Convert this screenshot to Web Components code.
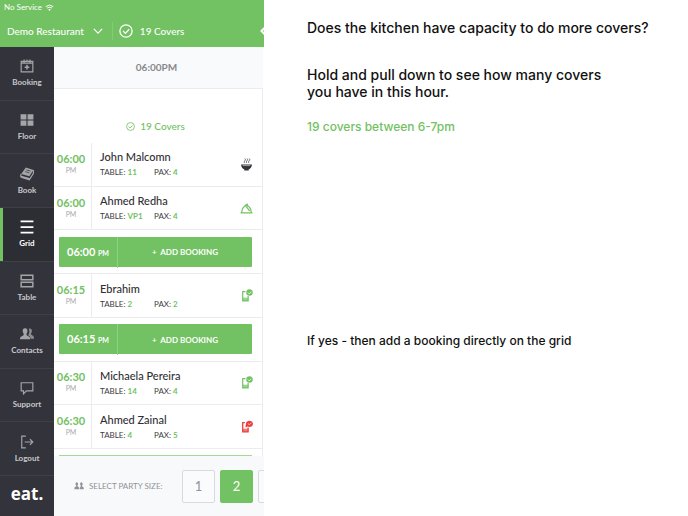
<!DOCTYPE html>
<html lang="en">
<head>
<meta charset="utf-8">
<meta name="viewport" content="width=device-width, initial-scale=1">
<title>Booking grid</title>
<style>
  body {
    --green: #72c162;
    --dark: #33333b;
    --line: #ececee;
    margin: 0;
    background: #fff;
    color: #3c3c40;
    font-family: Lato, "Open Sans", sans-serif;
  }
</style>
</head>
<body>
<guide-page>
  <booking-app slot="app"></booking-app>
  <guide-notes slot="notes">
    <p>Does the kitchen have capacity to do more covers?</p>
    <p>Hold and pull down to see how many covers<br>you have in this hour.</p>
    <p class="answer">19 covers between 6-7pm</p>
    <p class="action">If yes - then add a booking directly on the grid</p>
  </guide-notes>
</guide-page>

<script>
const ICONS = {
  wifi: `<g fill="none" stroke="currentColor" stroke-width="2.500"><path d="M2 9.500q10-8 20 0M5.500 13.500q6.500-5 13 0"/></g><path d="M8.500 17q3.500-2.500 7 0L12 21z" fill="currentColor"/>`,
  down: `<path d="M2 7l10 10L22 7" fill="none" stroke="currentColor" stroke-width="3"/>`,
  left: `<path d="M16 2L6 12l10 10" fill="none" stroke="currentColor" stroke-width="3.500"/>`,
  check: `<g fill="none" stroke="currentColor" stroke-width="2.200"><circle cx="12" cy="12" r="10.500"/><path d="M7 12l4 4 6.500-7"/></g>`,
  booking: `<path d="M2 4h20v18H2zM2 7h20M7 1v5M12 1v4M17 1v5" fill="none" stroke="currentColor" stroke-width="2"/><path d="M12 10v8M8 14h8" stroke="currentColor" stroke-width="2.500"/>`,
  floor: `<path d="M1 2h10v9H1zM13 2h10v9H13zM1 13h10v9H1zM13 13h10v9H13z" fill="currentColor"/>`,
  book: `<path d="M10 1l13 4-7 11L2 12z" fill="currentColor"/><path d="M11 5l7 2M9 8l7 2" stroke="var(--dark)" stroke-width="1.300"/><path d="M2 12q-2 5 1 6l13 4 7-11V5M2 16l14 4" fill="none" stroke="currentColor" stroke-width="2"/>`,
  grid: `<path d="M1 2.500h22M1 12h22M1 21.500h22" stroke="currentColor" stroke-width="3"/>`,
  table: `<path d="M2 2h20v8H2zM2 14h20v8H2z" fill="none" stroke="currentColor" stroke-width="2.500"/>`,
  contacts: `<path d="M15 3c5-2 6 3 5 6-1 2-2 3-1 4 2 2 5 1 5 7h-6c0-4-2-5-4-6 2-3 3-7 1-11z" fill="currentColor" opacity=".8"/><path d="M8.500 2c4 0 5 3 4 7-1 2-2 3-1 5 2 2 6 1 6 7H0c0-6 4-5 6-7 1-2 0-3-1-5-1-4 0-7 3.500-7z" fill="currentColor"/>`,
  support: `<path d="M2 3h20v14H11l-5 5v-5H2z" fill="none" stroke="currentColor" stroke-width="2"/>`,
  logout: `<path d="M10 2H3v20h7M8 12h14M17 7l5 5-5 5" fill="none" stroke="currentColor" stroke-width="2"/>`,
  bowl: `<path d="M2 12h20c0 5-3 8-6 9v2H8v-2c-3-1-6-4-6-9z" fill="currentColor"/><path d="M5 14h14" stroke="#fff" stroke-width="1"/><path d="M8 9q-1-2 1-4t0-4M12 9q-1-2 1-4t0-4M16 9q-1-2 1-4t0-4" fill="none" stroke="currentColor" stroke-width="1.300"/>`,
  cloche: `<path d="M1 20h22M3 19c1-7 4-12 9-12s8 5 9 12M9 7l4-3 2 4M12 9l6 8" fill="none" stroke="currentColor" stroke-width="2.200"/>`,
  phone: `<path d="M10 5H5v17h10v-9" fill="none" stroke="currentColor" stroke-width="2.200"/><path d="M5 16h10v6H5z" fill="currentColor" opacity=".7"/><circle cx="17.500" cy="6.500" r="6" fill="currentColor"/><path d="M14.500 6.500l2.500 2.500 4-4" fill="none" stroke="#fff" stroke-width="1.500"/>`,
  alert: `<path d="M9 5H5v17h10v-8" fill="none" stroke="currentColor" stroke-width="2.400"/><path d="M5 16h10v6H5z" fill="currentColor" opacity=".7"/><path d="M10 14l1-8c1-7 13-6 13 1 0 6-7 7-10 5z" fill="currentColor"/><path d="M14.500 6.500l2.500 2 4-3" fill="none" stroke="#fff" stroke-width="1.200"/>`,
  party: `<path d="M6.500 3a4 4 0 0 1 2 7v3c2 1 4 1 4 5v2H1v-2c0-4 2-4 4-5v-3a4 4 0 0 1 1.500-7zM17.500 3a4 4 0 0 1 2 7v3c2 1 4 1 4 5v2H14v-3l2-4v-3a4 4 0 0 1 1.500-7z" fill="currentColor"/>`,
};

class UiIcon extends HTMLElement {
  constructor() {
    super();
    this.attachShadow({ mode: 'open' });
  }

  connectedCallback() {
    this.shadowRoot.innerHTML = /*html*/`
<style>
  :host { display: block; flex: none; width: 14px; height: 14px; }
  svg { display: block; width: 100%; height: 100%; }
</style>
<svg viewBox="0 0 24 24" aria-hidden="true">${ICONS[this.getAttribute('name')]}</svg>`;
  }
}
customElements.define('ui-icon', UiIcon);

class GuidePage extends HTMLElement {
  constructor() {
    super();
    this.attachShadow({ mode: 'open' }).innerHTML = /*html*/`
<style>
  :host {
    display: grid;
    grid-template-columns: 264px minmax(0, 1fr);
    min-height: 100vh;
  }
</style>
<slot name="app"></slot>
<slot name="notes"></slot>`;
  }
}
customElements.define('guide-page', GuidePage);

class GuideNotes extends HTMLElement {
  constructor() {
    super();
    this.attachShadow({ mode: 'open' }).innerHTML = /*html*/`
<style>
  :host {
    display: block;
    padding: 19px 16px 20px 43px;
    color: #111;
    font: 500 14px/17px Inter, sans-serif;
  }
  ::slotted(p) { margin: 0 0 30px; }
  ::slotted(p:nth-child(2)) { margin-bottom: 18px; }
  ::slotted(.answer) { color: var(--green); font-size: 12px; }
  ::slotted(.action) { margin-top: 197px; font-size: 12px; }
</style>
<slot></slot>`;
  }
}
customElements.define('guide-notes', GuideNotes);

class AppHeader extends HTMLElement {
  constructor() {
    super();
    this.attachShadow({ mode: 'open' }).innerHTML = /*html*/`
<style>
  :host { display: block; height: 47px; background: var(--green); color: #fff; overflow: hidden; }
  .status { display: flex; align-items: center; gap: 3px; height: 14px; padding-left: 4px; font-size: 8px; }
  .status ui-icon { width: 9px; height: 9px; }
  .bar { display: flex; align-items: center; height: 33px; padding-left: 7px; font-size: 10px; font-weight: 500; }
  button { display: flex; align-items: center; border: 0; padding: 0; background: none; color: inherit; font: inherit; }
  .place { gap: 9px; padding-right: 9px; margin-right: 6px; border-right: 1px solid #86ca78; height: 18px; }
  .place ui-icon { width: 10px; height: 10px; }
  .covers { display: flex; align-items: center; gap: 7px; flex: 1; }
  .back { width: 6px; overflow: hidden; }
</style>
<div class="status">No Service <ui-icon name="wifi"></ui-icon></div>
<div class="bar">
  <button class="place">Demo Restaurant <ui-icon name="down"></ui-icon></button>
  <span class="covers"><ui-icon name="check"></ui-icon>19 Covers</span>
  <button class="back" aria-label="Back"><ui-icon name="left"></ui-icon></button>
</div>`;
  }
}
customElements.define('app-header', AppHeader);

class NavItem extends HTMLElement {
  constructor() {
    super();
    this.attachShadow({ mode: 'open' }).innerHTML = /*html*/`
<style>
  :host { display: flex; flex: 1; border-bottom: 1px solid #3f4046; color: #a5a5a9; }
  a {
    display: flex;
    flex: 1;
    flex-direction: column;
    align-items: center;
    justify-content: center;
    gap: 4px;
    color: inherit;
    font: 8px/10px Lato, sans-serif;
    font-weight: 700;
    text-decoration: none;
  }
  span { color: #c8c8cb; }
  :host([active]) { color: #fff; box-shadow: inset 3px 0 var(--green); background: #2d2d34; }
  :host([active]) span { color: #fff; }
</style>
<a href="#"><ui-icon name="${this.getAttribute('icon')}"></ui-icon><span><slot></slot></span></a>`;
  }
}
customElements.define('nav-item', NavItem);

class SideNav extends HTMLElement {
  constructor() {
    super();
    this.attachShadow({ mode: 'open' }).innerHTML = /*html*/`
<style>
  :host { display: flex; flex-direction: column; background: var(--dark); }
  nav { display: flex; flex: 1; flex-direction: column; }
  .brand {
    height: 40px;
    color: #fff;
    font: 700 17px/36px "Open Sans", sans-serif;
    text-align: center;
  }
</style>
<nav>
  <nav-item icon="booking">Booking</nav-item>
  <nav-item icon="floor">Floor</nav-item>
  <nav-item icon="book">Book</nav-item>
  <nav-item icon="grid" active>Grid</nav-item>
  <nav-item icon="table">Table</nav-item>
  <nav-item icon="contacts">Contacts</nav-item>
  <nav-item icon="support">Support</nav-item>
  <nav-item icon="logout">Logout</nav-item>
</nav>
<div class="brand">eat.</div>`;
  }
}
customElements.define('side-nav', SideNav);

class BookingRow extends HTMLElement {
  constructor() {
    super();
    const data = this.dataset;
    this.attachShadow({ mode: 'open' }).innerHTML = /*html*/`
<style>
  :host {
    display: grid;
    flex: 1;
    grid-template-columns: 38px minmax(0, 1fr) 13px;
    align-items: center;
    padding-right: 9px;
    border-bottom: 1px solid var(--line);
  }
  .time {
    display: flex;
    flex-direction: column;
    align-self: stretch;
    justify-content: center;
    box-sizing: border-box;
    padding: 0 3px 2px 0;
    border-right: 1px solid var(--line);
    color: var(--green);
    font: 700 11px/13px Lato, sans-serif;
    text-align: center;
  }
  small { color: #a9a9ad; font: 7px/10px Lato, sans-serif; }
  .guest { padding-left: 8px; }
  h2 { margin: 0; font: 500 11px/16px Lato, sans-serif; color: #303034; }
  .meta { display: grid; grid-template-columns: 54px auto; font: 8px/14px Lato, sans-serif; }
  b { color: var(--green); }
  ui-icon { width: 13px; height: 13px; color: ${data.color || 'var(--green)'}; }
</style>
<div class="time">${data.time}<small>PM</small></div>
<div class="guest">
  <h2><slot></slot></h2>
  <div class="meta"><span>TABLE: <b>${data.table}</b></span><span>PAX: <b>${data.pax}</b></span></div>
</div>
<ui-icon name="${data.icon}"></ui-icon>`;
  }
}
customElements.define('booking-row', BookingRow);

class AddBooking extends HTMLElement {
  constructor() {
    super();
    this.attachShadow({ mode: 'open' }).innerHTML = /*html*/`
<style>
  :host { display: flex; flex: 1; align-items: center; padding: 0 10px 0 5px; border-bottom: 1px solid var(--line); }
  button {
    display: grid;
    flex: 1;
    grid-template-columns: 59px minmax(0, 1fr);
    align-items: center;
    height: 30px;
    padding: 0;
    border: 0;
    border-radius: 1px;
    background: var(--green);
    color: #fff;
    font: 700 8px/30px Lato, sans-serif;
  }
  .time { border-right: 1px solid #93d087; font-size: 11px; }
  small { font-size: 7px; }
</style>
<button><span class="time">${this.dataset.time} <small>PM</small></span><span>+&nbsp; ADD BOOKING</span></button>`;
  }
}
customElements.define('add-booking', AddBooking);

class PartySize extends HTMLElement {
  constructor() {
    super();
    this.attachShadow({ mode: 'open' }).innerHTML = /*html*/`
<style>
  :host {
    display: flex;
    align-items: center;
    height: 60px;
    padding-left: 20px;
    overflow: hidden;
    background: #f8f9fb;
    color: #929297;
    font-size: 8px;
  }
  ui-icon { width: 10px; height: 10px; margin-right: 5px; }
  .label { flex: 1; white-space: nowrap; }
  .sizes { display: flex; flex: none; gap: 5px; width: 82px; overflow: hidden; }
  button {
    flex: none;
    box-sizing: border-box;
    width: 33px;
    height: 33px;
    padding: 0;
    border: 1px solid #d9dadd;
    border-radius: 2px;
    background: #fafbfc;
    color: #929297;
    font: 13px/16px Lato, sans-serif;
  }
  .on { border-color: var(--green); background: var(--green); color: #fff; }
</style>
<ui-icon name="party"></ui-icon>
<span class="label" id="label">SELECT PARTY SIZE:</span>
<div class="sizes" role="group" aria-labelledby="label">
  <button>1</button><button class="on" aria-pressed="true">2</button><button aria-label="More"></button>
</div>`;
  }
}
customElements.define('party-size', PartySize);

class BookingApp extends HTMLElement {
  constructor() {
    super();
    this.attachShadow({ mode: 'open' }).innerHTML = /*html*/`
<style>
  :host { display: flex; flex-direction: column; }
  .body { display: grid; flex: 1; grid-template-columns: 54px minmax(0, 1fr); }
  main { display: flex; flex-direction: column; }
  .hour {
    height: 41px;
    margin-right: 1px;
    padding-right: 4px;
    border-bottom: 1px solid var(--line);
    background: #f9fafb;
    color: #88888c;
    font: 700 10px/41px Lato, sans-serif;
    text-align: center;
  }
  .list { display: flex; flex: 1; flex-direction: column; margin-right: 1px; border-right: 1px solid var(--line); }
  .pulled {
    display: flex;
    align-items: center;
    justify-content: center;
    gap: 5px;
    height: 34px;
    padding: 20px 5px 0 0;
    color: var(--green);
    font-size: 10px;
    font-weight: 500;
  }
  .pulled ui-icon { width: 9px; height: 9px; }
  .next { height: 6px; margin: 0 10px 0 5px; border-bottom: 1px solid #a5d89b; }
</style>
<app-header></app-header>
<div class="body">
  <side-nav></side-nav>
  <main>
    <div class="hour">06:00PM</div>
    <div class="list">
      <div class="pulled"><ui-icon name="check"></ui-icon>19 Covers</div>
      <booking-row data-time="06:00" data-table="11" data-pax="4" data-icon="bowl" data-color="#333338">John Malcomn</booking-row>
      <booking-row data-time="06:00" data-table="VP1" data-pax="4" data-icon="cloche">Ahmed Redha</booking-row>
      <add-booking data-time="06:00"></add-booking>
      <booking-row data-time="06:15" data-table="2" data-pax="2" data-icon="phone">Ebrahim</booking-row>
      <add-booking data-time="06:15"></add-booking>
      <booking-row data-time="06:30" data-table="14" data-pax="4" data-icon="phone">Michaela Pereira</booking-row>
      <booking-row data-time="06:30" data-table="4" data-pax="5" data-icon="alert" data-color="#e8413f">Ahmed Zainal</booking-row>
      <div class="next"></div>
    </div>
    <party-size></party-size>
  </main>
</div>`;
  }
}
customElements.define('booking-app', BookingApp);
</script>
</body>
</html>
